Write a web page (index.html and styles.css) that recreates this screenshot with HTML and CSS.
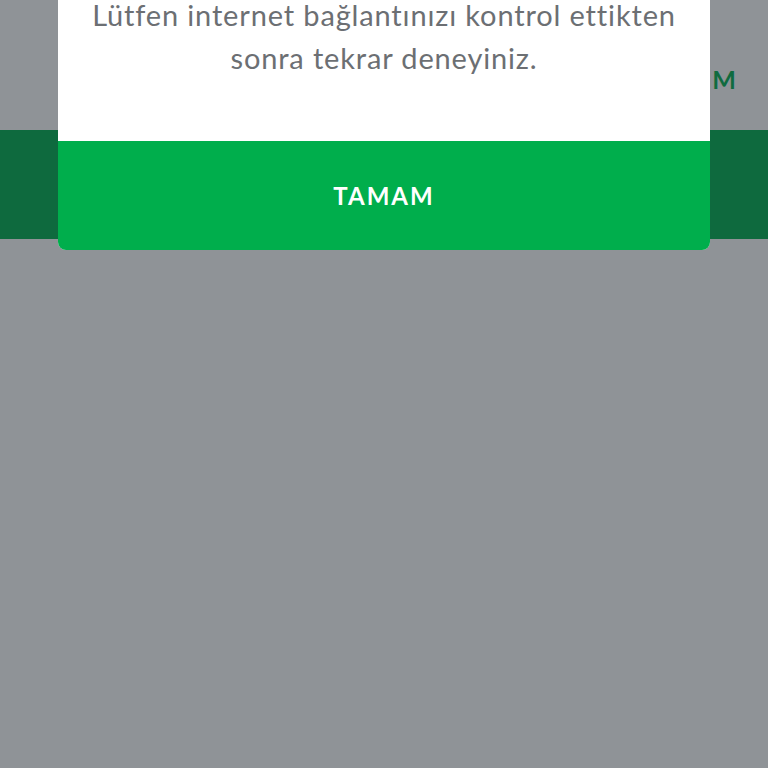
FILE: index.html
```
<!DOCTYPE html>
<html lang="tr">
<head>
<meta charset="utf-8">
<link rel="stylesheet" href="styles.css">
</head>
<body>
<div class="page">
  <div class="topbar"><span class="topbar-action">TAMAM</span></div>
  <div class="greenbar"></div>
</div>
<div class="dialog">
  <p class="dialog-msg">Lütfen internet bağlantınızı kontrol ettikten<br>sonra tekrar deneyiniz.</p>
  <div class="dialog-btn">TAMAM</div>
</div>
</body>
</html>
```
FILE: styles.css
```
html, body {
  margin: 0;
  padding: 0;
}
body {
  width: 768px;
  height: 768px;
  background: #8f9397;
  font-family: Lato, "Noto Sans", sans-serif;
  font-variant-ligatures: none;
  position: relative;
  overflow: hidden;
}
.page {
  display: flex;
  flex-direction: column;
}
.topbar {
  height: 130px;
  display: flex;
  justify-content: flex-end;
  align-items: flex-start;
  padding-right: 28px;
  box-sizing: border-box;
}
.topbar-action {
  margin-top: 64px;
  font-size: 25px;
  font-weight: 700;
  color: #106b3f;
  letter-spacing: 4px;
}
.greenbar {
  height: 109px;
  background: #0e6a3e;
}
.dialog {
  position: absolute;
  left: 58px;
  top: -60px;
  width: 652px;
  background: #ffffff;
  border-radius: 8px;
  overflow: hidden;
  display: flex;
  flex-direction: column;
}
.dialog-msg {
  margin: 0;
  padding: 53px 10px 62px;
  text-align: center;
  font-size: 29px;
  line-height: 43px;
  letter-spacing: 0.85px;
  color: #6c6f73;
}
.dialog-btn {
  height: 109px;
  background: #00ae4c;
  color: #ffffff;
  font-size: 24px;
  font-weight: 700;
  letter-spacing: 2px;
  display: flex;
  align-items: center;
  justify-content: center;
}
```
